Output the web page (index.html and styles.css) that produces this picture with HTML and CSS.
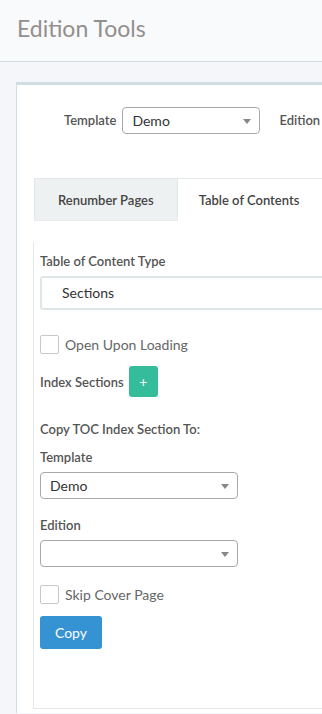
FILE: index.html
```html
<!DOCTYPE html>
<html lang="en">
<head>
  <meta charset="UTF-8">
  <meta name="viewport" content="width=device-width, initial-scale=1.0">
  <title>Edition Tools</title>
  <link rel="stylesheet" href="styles.css">
</head>
<body>
  <header class="page-header">
    <h1>Edition Tools</h1>
  </header>

  <div class="content">
    <div class="panel">
      <div class="top-filters">
        <label>Template</label>
        <div class="select select-top">Demo<span class="caret"></span></div>
        <label class="edition-label">Edition</label>
      </div>

      <div class="tabs">
        <div class="tab">Renumber Pages</div>
        <div class="tab active">Table of Contents</div>
      </div>

      <div class="tab-content">
        <div class="field">
          <label>Table of Content Type</label>
          <div class="type-box">Sections</div>
        </div>

        <div class="check-row check-open">
          <span class="checkbox"></span>
          <span>Open Upon Loading</span>
        </div>

        <div class="index-row">
          <label>Index Sections</label>
          <button class="btn btn-add">+</button>
        </div>

        <h4 class="copy-title">Copy TOC Index Section To:</h4>

        <div class="field">
          <label>Template</label>
          <div class="select">Demo<span class="caret"></span></div>
        </div>

        <div class="field">
          <label>Edition</label>
          <div class="select"><span class="caret"></span></div>
        </div>

        <div class="check-row">
          <span class="checkbox"></span>
          <span>Skip Cover Page</span>
        </div>

        <button class="btn btn-copy">Copy</button>
      </div>
    </div>
  </div>
</body>
</html>
```

FILE: styles.css
```css
:root {
  --text: #555;
  --text-muted: #666;
  --border-light: #e2e8ea;
  --bg-page: #f4f6f9;
}

body {
  font-family: "Source Sans Pro", Lato, "Liberation Sans", sans-serif;
  font-size: 13px;
  color: var(--text);
  background: var(--bg-page);
  margin: 0;
  height: 714px;
  overflow: hidden;
}

.page-header {
  background: #f8fafc;
  border-bottom: 1px solid #d3dde6;
  height: 62px;
  box-sizing: border-box;
  padding: 14px 17px 0;
}

.page-header h1 {
  margin: 0;
  font-size: 23px;
  font-weight: 400;
  color: #948f8c;
}

.content {
  padding: 20px 0 0 16px;
}

.panel {
  background: #fff;
  border-top: 3px solid #d2dce4;
  border-left: 1px solid #d2dce4;
  height: 631px;
  padding: 21px 0 0 16px;
  box-sizing: border-box;
  overflow: hidden;
}

.top-filters {
  display: flex;
  align-items: center;
  gap: 6px;
  padding-left: 31px;
  white-space: nowrap;
}

label {
  font-weight: 600;
  color: var(--text);
}

.select {
  position: relative;
  border: 1px solid #a9a9a9;
  border-radius: 4px;
  height: 27px;
  width: 198px;
  box-sizing: border-box;
  padding: 4px 9px;
  font-size: 14px;
  color: #333;
}

.select-top {
  width: 138px;
  flex-shrink: 0;
  margin-top: 1px;
}

.edition-label {
  margin-left: 13px;
}

.caret {
  position: absolute;
  right: 8px;
  top: 11px;
  border-left: 4px solid transparent;
  border-right: 4px solid transparent;
  border-top: 5px solid #888;
}

.tabs {
  display: flex;
  margin-top: 44px;
  margin-right: -60px;
  padding-left: 1px;
}

.tab {
  border: 1px solid var(--border-light);
  border-bottom-color: #e8ecee;
  height: 43px;
  box-sizing: border-box;
  padding: 0 23px;
  display: flex;
  align-items: center;
  flex-shrink: 0;
  white-space: nowrap;
  font-weight: 600;
  color: #444;
  background: #eef1f2;
}

.tab.active {
  background: #fff;
  border-left: none;
  border-bottom: none;
  flex: 1;
  padding-left: 21px;
}

.tab-content {
  margin-top: 21px;
  border-left: 1px solid var(--border-light);
  border-bottom: 1px solid var(--border-light);
  height: 467px;
  box-sizing: border-box;
  padding: 11px 0 0 6px;
}

.field {
  display: flex;
  flex-direction: column;
  gap: 7px;
  margin-bottom: 18px;
}

.type-box {
  border: 2px solid #dfe6e8;
  border-radius: 3px;
  height: 34px;
  margin-right: -40px;
  box-sizing: border-box;
  padding: 6px 20px;
  font-size: 14px;
  color: #333;
}

.check-row {
  display: flex;
  align-items: center;
  gap: 6px;
  color: var(--text-muted);
  font-size: 14px;
}

.check-open {
  margin-top: 25px;
}

.checkbox {
  width: 19px;
  height: 19px;
  border: 1px solid #c8c8c8;
  border-radius: 2px;
  box-sizing: border-box;
  background: #fff;
}

.index-row {
  display: flex;
  align-items: center;
  gap: 5px;
  margin-top: 12px;
}

.btn {
  border: none;
  border-radius: 3px;
  color: #fff;
  font-family: inherit;
  cursor: pointer;
}

.btn-add {
  background: #35bc9a;
  width: 29px;
  height: 31px;
  font-size: 14px;
  padding: 0;
}

.copy-title {
  margin: 24px 0 12px;
  font-size: 13px;
  font-weight: 600;
}

.btn-copy {
  background: #3592d3;
  width: 62px;
  height: 33px;
  font-size: 14px;
  margin-top: 12px;
}
```
